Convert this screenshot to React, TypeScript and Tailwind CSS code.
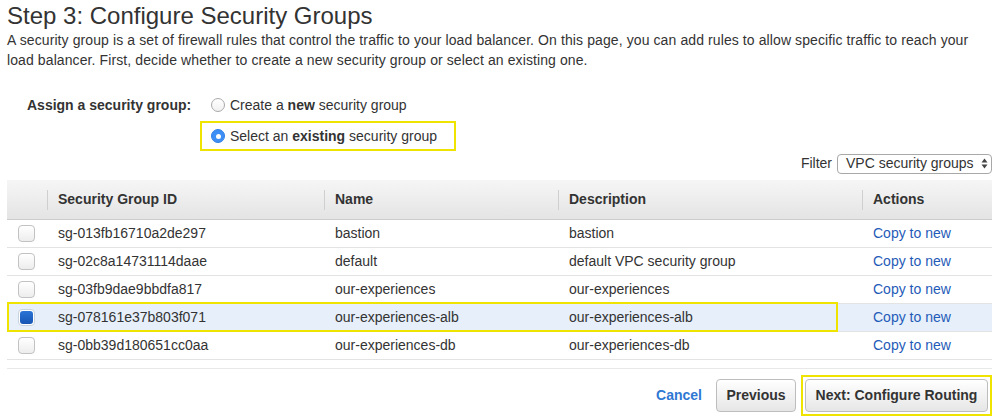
import React from 'react';

type Group = { id: string; name: string; description: string; selected?: boolean };

const groups: Group[] = [
  { id: 'sg-013fb16710a2de297', name: 'bastion', description: 'bastion' },
  { id: 'sg-02c8a14731114daae', name: 'default', description: 'default VPC security group' },
  { id: 'sg-03fb9dae9bbdfa817', name: 'our-experiences', description: 'our-experiences' },
  { id: 'sg-078161e37b803f071', name: 'our-experiences-alb', description: 'our-experiences-alb', selected: true },
  { id: 'sg-0bb39d180651cc0aa', name: 'our-experiences-db', description: 'our-experiences-db' },
];

function Radio({ checked }: { checked?: boolean }) {
  if (checked) {
    return (
      <span className="flex h-[14px] w-[14px] items-center justify-center rounded-full bg-[#3d8ef5] border border-[#2f7fe6]">
        <span className="h-[5px] w-[5px] rounded-full bg-white" />
      </span>
    );
  }
  return <span className="h-[14px] w-[14px] rounded-full border border-[#a9a9a9] bg-gradient-to-b from-white to-[#f1f1f1]" />;
}

function Checkbox({ checked }: { checked?: boolean }) {
  if (checked) {
    return (
      <span className="flex h-[17px] w-[17px] items-center justify-center rounded-[4px] border border-[#c9d3de] bg-white">
        <span className="h-[13px] w-[13px] rounded-[3px] bg-gradient-to-b from-[#2a74d6] to-[#1756b4]" />
      </span>
    );
  }
  return <span className="h-[17px] w-[17px] rounded-[4px] border border-[#c2c2c2] bg-gradient-to-b from-white to-[#ededed]" />;
}

function HeaderCell({ label, first }: { label?: string; first?: boolean }) {
  return (
    <div className="flex h-full items-center">
      {!first && <span className="h-[20px] w-px bg-[#cfcfcf]" />}
      {label && <span className="pl-[10px] font-bold">{label}</span>}
    </div>
  );
}

export default function App() {
  return (
    <div className="h-[418px] w-[998px] overflow-hidden bg-white pl-[7px] pr-[6px] font-['Liberation_Sans',Arial,sans-serif] text-[14px] text-[#333]">
      <h1 className="pt-[2px] text-[24px] leading-[28px]">Step 3: Configure Security Groups</h1>
      <p className="leading-[20px] tracking-[0.1px]">
        A security group is a set of firewall rules that control the traffic to your load balancer. On this page, you can add rules to allow specific traffic to reach your
        <br />
        load balancer. First, decide whether to create a new security group or select an existing one.
      </p>

      <div className="mt-[25px] flex">
        <div className="w-[193px] pl-[20px] font-bold leading-[20px]">Assign a security group:</div>
        <div className="flex flex-col">
          <label className="flex h-[20px] items-center gap-[5px] pl-[11px]">
            <Radio />
            <span>
              Create a <b>new</b> security group
            </span>
          </label>
          <label className="mt-[6px] flex h-[30px] w-[256px] items-center gap-[5px] border-2 border-[#efe300] pl-[9px]">
            <Radio checked />
            <span>
              Select an <b>existing</b> security group
            </span>
          </label>
        </div>
      </div>

      <div className="mt-[2px] flex items-center justify-end gap-[5px]">
        <span>Filter</span>
        <div className="flex h-[20px] w-[155px] items-center justify-between rounded-[4px] border border-[#a8a8a8] bg-white pl-[8px] pr-[3px]">
          <span>VPC security groups</span>
          <svg width="7" height="11" viewBox="0 0 7 11">
            <path d="M3.5 0.5 L6.5 4.5 L0.5 4.5 Z" fill="#444" />
            <path d="M3.5 10.5 L6.5 6.5 L0.5 6.5 Z" fill="#444" />
          </svg>
        </div>
      </div>

      <div className="mt-[6px] w-[985px]">
        <div className="grid h-[40px] grid-cols-[40px_277px_234px_304px_1fr] border-b border-[#cdcdcd] bg-gradient-to-b from-[#f6f6f6] to-[#e4e4e4]">
          <HeaderCell first />
          <HeaderCell label="Security Group ID" />
          <HeaderCell label="Name" />
          <HeaderCell label="Description" />
          <HeaderCell label="Actions" />
        </div>
        {groups.map((g) => (
          <div
            key={g.id}
            className={`relative grid h-[28px] grid-cols-[40px_277px_234px_304px_1fr] items-center border-b border-[#e3e3e3] ${
              g.selected ? 'bg-[#e6effa]' : 'bg-white'
            }`}
          >
            <div className="flex pl-[11px]">
              <Checkbox checked={g.selected} />
            </div>
            <div className="pl-[11px]">{g.id}</div>
            <div className="pl-[11px]">{g.name}</div>
            <div className="pl-[11px]">{g.description}</div>
            <div className="pl-[11px] text-[#1f5bb8]">Copy to new</div>
            {g.selected && (
              <div className="pointer-events-none absolute left-0 top-[-2px] h-[30px] w-[831px] border-2 border-[#efe300]" />
            )}
          </div>
        ))}
        <div className="mt-[8px] h-px bg-[#e8e8e8]" />
      </div>

      <div className="mt-[6px] flex w-[985px] items-center justify-end">
        <span className="mr-[14px] font-bold text-[#2f78d3]">Cancel</span>
        <button className="h-[33px] w-[80px] rounded-[4px] border border-[#bdbdbd] bg-gradient-to-b from-white to-[#e6e6e6] font-bold text-[#333]">
          Previous
        </button>
        <div className="ml-[5px] border-2 border-[#efe300] px-[2px] py-[2px]">
          <button className="h-[33px] w-[183px] rounded-[4px] border border-[#bdbdbd] bg-gradient-to-b from-white to-[#e6e6e6] font-bold text-[#333]">
            Next: Configure Routing
          </button>
        </div>
      </div>
    </div>
  );
}
